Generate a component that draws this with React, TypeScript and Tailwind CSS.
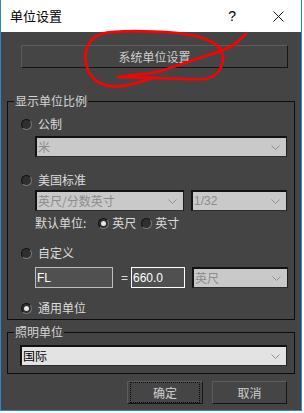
import { type ReactNode } from "react";

const cjk = "font-['Noto_Sans_CJK_SC','Noto_Sans',sans-serif]";

function Chevron() {
  return (
    <svg width="9" height="5" viewBox="0 0 9 5" className="shrink-0">
      <polyline points="0.5,0.5 4.5,4.5 8.5,0.5" fill="none" stroke="#8f8f8f" strokeWidth="1" />
    </svg>
  );
}

function Radio({ checked = false }: { checked?: boolean }) {
  return (
    <span className="flex h-[11px] w-[11px] shrink-0 items-center justify-center rounded-full border border-t-[#111] border-l-[#111] border-r-[#777] border-b-[#777] bg-[#2f2f2f]">
      {checked ? <span className="h-[5px] w-[5px] rounded-full bg-[#e6e6e6]" /> : null}
    </span>
  );
}

function RadioRow({ label, checked, className }: { label: string; checked?: boolean; className?: string }) {
  return (
    <div className={`flex h-[16px] items-center gap-[6px] pl-[13px] ${className ?? ""}`}>
      <Radio checked={checked} />
      <span className="text-[12px] leading-[16px] text-[#dcdcdc]">{label}</span>
    </div>
  );
}

function Select({
  value,
  className,
  light = false,
  latin = false,
}: {
  value: string;
  className?: string;
  light?: boolean;
  latin?: boolean;
}) {
  return (
    <div
      className={`flex h-[21px] items-center justify-between border-t-2 border-l-2 border-r border-b border-t-[#121212] border-l-[#121212] border-r-[#1c1c1c] border-b-[#2c2c2c] pl-[1px] pr-[6px] ${
        light ? "bg-[#e3e3e3] text-[#000]" : "bg-[#c9c9c9] text-[#8c8c8c]"
      } ${className ?? ""}`}
    >
      <span
        className={`text-[12px] leading-[16px] ${
          latin ? "font-['Liberation_Sans',sans-serif]" : ""
        }`}
      >
        {value}
      </span>
      <Chevron />
    </div>
  );
}

function Group({ title, className, children }: { title: string; className?: string; children: ReactNode }) {
  return (
    <div className={`relative mx-[6px] border border-[#0c0c0c] ${className ?? ""}`}>
      <span className="absolute -top-[9px] left-[6px] bg-[#444] px-[1px] text-[12px] leading-[16px] text-[#d4d4d4]">
        {title}
      </span>
      {children}
    </div>
  );
}

function DialogButton({ label, focused = false, className }: { label: string; focused?: boolean; className?: string }) {
  return (
    <div
      className={`flex h-[23px] items-center justify-center border border-t-[#5c5c5c] border-l-[#5c5c5c] border-r-[#151515] border-b-[#151515] bg-[#454545] ${className ?? ""}`}
    >
      <div
        className={`flex h-full w-full items-center justify-center ${
          focused ? "m-[2px] border border-dotted border-[#0a0a0a]" : ""
        }`}
      >
        <span className="text-[12px] leading-[16px] text-[#cfcfcf]">{label}</span>
      </div>
    </div>
  );
}

export default function App() {
  return (
    <div className={`relative h-[413px] w-[304px] bg-white ${cjk}`}>
      <div className="flex h-[411px] w-[302px] flex-col border-x border-b border-[#2a86d6]">
        {/* title bar */}
        <div className="flex h-[32px] shrink-0 items-center bg-white">
          <span className="ml-[9px] text-[13px] leading-[16px] text-black">单位设置</span>
          <span className="ml-auto font-['Liberation_Sans',sans-serif] text-[14px] leading-[16px] text-black">?</span>
          <svg width="11" height="11" viewBox="0 0 11 11" className="ml-[37px] mr-[17px]">
            <path d="M0.5 0.5 L10.5 10.5 M10.5 0.5 L0.5 10.5" stroke="#111" strokeWidth="1" />
          </svg>
        </div>

        {/* body */}
        <div className="flex flex-1 flex-col bg-[#444]">
          <DialogButton label="系统单位设置" className="ml-[20px] mt-[13px] w-[267px]" />

          <Group title="显示单位比例" className="mt-[33px] h-[219px]">
            <RadioRow label="公制" className="mt-[14px]" />
            <Select value="米" className="ml-[27px] mt-[4px] w-[252px]" />

            <RadioRow label="美国标准" className="mt-[15px]" />
            <div className="ml-[27px] mt-[2px] flex gap-[7px]">
              <Select value="英尺/分数英寸" className="w-[149px]" />
              <Select value="1/32" latin className="w-[96px]" />
            </div>
            <div className="ml-[27px] mt-[4px] flex h-[16px] items-center text-[12px] leading-[16px] text-[#dcdcdc]">
              <span>默认单位:</span>
              <span className="ml-[12px]">
                <Radio checked />
              </span>
              <span className="ml-[3px]">英尺</span>
              <span className="ml-[5px]">
                <Radio />
              </span>
              <span className="ml-[3px]">英寸</span>
            </div>

            <RadioRow label="自定义" className="mt-[14px]" />
            <div className="ml-[27px] mt-[6px] flex items-center">
              <div className="flex h-[21px] w-[78px] items-center border border-[#bdbdbd] bg-[#505050] pl-[1px]">
                <span className="font-['Liberation_Sans',sans-serif] text-[12px] leading-[16px] text-white">FL</span>
              </div>
              <span className="ml-[8px] w-[10px] font-['Liberation_Sans',sans-serif] text-[12px] leading-[16px] text-[#dcdcdc]">
                =
              </span>
              <div className="flex h-[21px] w-[54px] items-center border border-white bg-[#505050] pl-[1px]">
                <span className="font-['Liberation_Sans',sans-serif] text-[12px] leading-[16px] text-white">660.0</span>
              </div>
              <Select value="英尺" className="ml-[7px] w-[96px]" />
            </div>

            <RadioRow label="通用单位" checked className="mt-[12px]" />
          </Group>

          <Group title="照明单位" className="mt-[12px] h-[42px]">
            <Select value="国际" light className="ml-[12px] mt-[12px] h-[20px] w-[267px]" />
          </Group>

          <div className="mt-[7px] flex justify-end gap-[9px] pr-[14px]">
            <DialogButton label="确定" focused className="w-[76px]" />
            <DialogButton label="取消" className="w-[75px]" />
          </div>
        </div>
      </div>

      {/* red hand-drawn annotation */}
      <svg
        width="304"
        height="413"
        viewBox="0 0 304 413"
        className="pointer-events-none absolute left-0 top-0"
      >
        <g fill="none" stroke="#ff0000" strokeWidth="2.6" strokeLinecap="round" strokeLinejoin="round">
          <path d="M178 33 C150 31 116 30 101 34 C89 38 84 50 86 62 C88 75 96 84 110 86 C124 88 140 82 153 78 C172 78 192 80 206 79 C218 76 224 66 223 56 C222 46 210 37 178 33" />
          <path d="M246 34 L234 45 L221 51 L158 72 L118 77 L160 78" />
        </g>
      </svg>
    </div>
  );
}
